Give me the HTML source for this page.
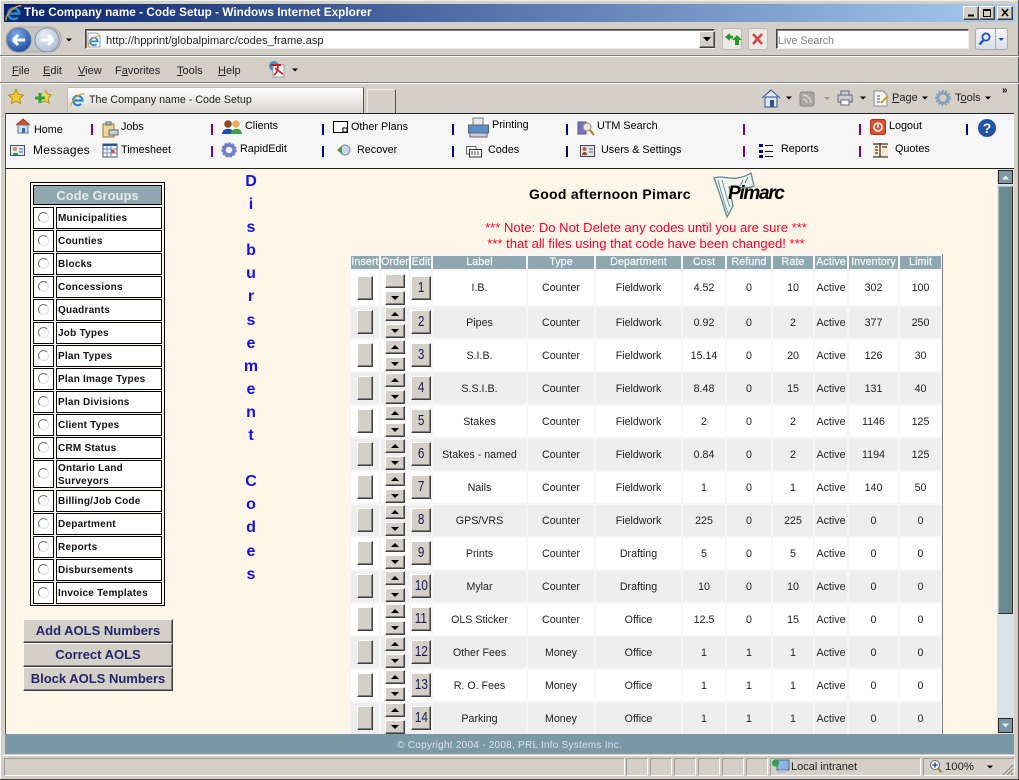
<!DOCTYPE html>
<html><head><meta charset="utf-8"><title>The Company name - Code Setup</title>
<style>
html,body{margin:0;padding:0;width:1019px;height:780px;overflow:hidden;background:#d4d0c8;font-family:"Liberation Sans",Arial,sans-serif;color:#000}
.a{position:absolute}
.t{position:absolute;white-space:nowrap;line-height:14px;font-size:10.8px}
.m{font-size:11px;color:#222}
u{text-decoration:underline}
.sep{position:absolute;width:1px;height:11px;border-left:2px solid #800080}
.n{border-color:#000080}
.pane{position:absolute;top:758px;height:16px;border:1px solid #999;border-right-color:#fff;border-bottom-color:#fff}
.box{position:absolute;box-sizing:border-box;background:#fff;border:1px solid #000;height:22px}
.lb{font:bold 10px/22px "Liberation Sans",Arial,sans-serif;padding-left:1px;letter-spacing:.23px;white-space:nowrap;color:#111}
.rad{position:absolute;left:4px;top:4px;width:9px;height:9px;border-radius:50%;border:1.5px solid #777;border-right-color:#ddd;border-bottom-color:#ddd;background:#fff;box-sizing:content-box}
.btn{position:absolute;box-sizing:border-box;background:#d4d0c8;border:1px solid;border-color:#fff #404040 #404040 #fff;box-shadow:inset -1px -1px 0 #808080}
.bb{left:23px;width:150px;height:24px;text-align:center;font:bold 13px/21px "Liberation Sans",Arial,sans-serif;color:#25256e}
table{border-collapse:separate;border-spacing:2px;table-layout:fixed;width:594px;font-size:10.67px;color:#222}
th{background:#8fa8b0;color:#fff;font-weight:normal;height:13px;padding:0;line-height:13px;overflow:hidden;white-space:nowrap;letter-spacing:.1px;-webkit-text-stroke:.2px #eef3f4}
td{padding:0;text-align:center;height:31px;background:#fff;position:relative;white-space:nowrap;overflow:visible}
tbody tr:first-child td{height:34px}
tr.g td{background:#eee}
.ins{left:6px;top:3px;width:16px;height:24px}
.up{left:4px;top:0;width:20px;height:14px}
.dn{left:4px;top:17px;width:20px;height:14px}
.ed{left:0;top:3px;width:20px;height:24px;font-size:15px;line-height:22px;color:#1a1a55;text-align:center}
.ed b{display:inline-block;font-weight:normal;transform:scaleX(.78)}
.up:after,.dn:after{content:"";position:absolute;left:5px;width:0;height:0;border-left:4px solid transparent;border-right:4px solid transparent}
.up:after{top:4px;border-bottom:4px solid #000}
.dn:after{top:4px;border-top:4px solid #000}
tbody tr:first-child .ins,tbody tr:first-child .ed{top:5px}
tbody tr:first-child .up{top:3px}
tbody tr:first-child .up:after{display:none}
tbody tr:first-child .dn{top:20px}
</style></head>
<body>
<!-- title bar -->
<div class="a" style="left:0;top:0;width:1019px;height:780px;background:#d4d0c8"></div>
<div class="a" style="left:0;top:0;width:1019px;height:1px;background:#eee"></div>
<div class="a" style="left:0;top:0;width:1px;height:780px;background:#fff"></div>
<div class="a" style="left:1018px;top:0;width:1px;height:780px;background:#555"></div>
<div class="a" style="left:0;top:779px;width:1019px;height:1px;background:#444"></div>
<div class="a" style="left:4px;top:4px;width:1011px;height:18px;background:linear-gradient(90deg,#0a246a,#a6caf0)"></div>
<div class="t" style="left:24px;top:6px;font-weight:bold;font-size:11.7px;color:#fff;letter-spacing:.05px">The Company name - Code Setup - Windows Internet Explorer</div>
<div class="btn" style="left:963px;top:6px;width:16px;height:14px"></div>
<div class="btn" style="left:979px;top:6px;width:16px;height:14px"></div>
<div class="btn" style="left:997px;top:6px;width:16px;height:14px"></div>

<!-- address row -->
<div class="a" style="left:85px;top:29px;width:630px;height:20px;box-sizing:border-box;background:#fff;border:1px solid #444;border-right-color:#eee;border-bottom-color:#eee;box-shadow:inset 1px 1px 0 #808080"></div>
<div class="t" style="left:106px;top:34px;color:#222;font-size:11.2px">http://hpprint/globalpimarc/codes_frame.asp</div>
<div class="btn" style="left:699px;top:31px;width:16px;height:17px"></div>
<div class="a" style="left:722px;top:28px;width:20px;height:22px;box-sizing:border-box;background:#eceae6;border:1px solid #bbb;border-radius:3px"></div>
<div class="a" style="left:748px;top:28px;width:20px;height:22px;box-sizing:border-box;background:#eceae6;border:1px solid #bbb;border-radius:3px"></div>
<div class="a" style="left:776px;top:29px;width:193px;height:20px;box-sizing:border-box;background:#fff;border:1px solid #444;border-right-color:#eee;border-bottom-color:#eee;box-shadow:inset 1px 1px 0 #808080"></div>
<div class="t" style="left:778px;top:34px;color:#808080;font-size:10.6px">Live Search</div>
<div class="a" style="left:975px;top:28px;width:33px;height:22px;box-sizing:border-box;background:linear-gradient(#f4f6fa,#d8deea);border:1px solid #aaa;border-radius:3px"></div>
<div class="a" style="left:995px;top:29px;width:1px;height:20px;background:#aaa"></div>
<div class="a" style="left:0;top:55px;width:1019px;height:1px;background:#808080"></div>
<div class="a" style="left:0;top:56px;width:1019px;height:1px;background:#fff"></div>

<!-- menu -->
<div class="t m" style="left:12px;top:64px"><u>F</u>ile</div>
<div class="t m" style="left:43px;top:64px"><u>E</u>dit</div>
<div class="t m" style="left:78px;top:64px"><u>V</u>iew</div>
<div class="t m" style="left:115px;top:64px">F<u>a</u>vorites</div>
<div class="t m" style="left:177px;top:64px"><u>T</u>ools</div>
<div class="t m" style="left:218px;top:64px"><u>H</u>elp</div>
<div class="a" style="left:0;top:82px;width:1019px;height:1px;background:#808080"></div>
<div class="a" style="left:0;top:83px;width:1019px;height:1px;background:#fff"></div>

<!-- tabs -->
<div class="a" style="left:67px;top:87px;width:297px;height:26px;box-sizing:border-box;background:linear-gradient(#fff,#d8d5cd);border:1px solid #bbb;border-right:1px solid #555;border-bottom:0"></div>
<div class="t" style="left:89px;top:93px;font-size:10.7px;color:#222">The Company name - Code Setup</div>
<div class="a" style="left:367px;top:89px;width:29px;height:24px;box-sizing:border-box;background:#d4d0c8;border:1px solid #eee;border-right:1px solid #555;border-bottom:0"></div>
<div class="t m" style="left:892px;top:91px"><u>P</u>age</div>
<div class="t m" style="left:955px;top:91px">T<u>o</u>ols</div>
<div class="t" style="left:1002px;top:84px;font-weight:bold;font-size:10px">»</div>

<!-- app nav -->
<div class="a" style="left:5px;top:113px;width:1009px;height:56px;box-sizing:border-box;background:#f6f6f6;border-top:1px solid #222;border-bottom:1px solid #222;border-left:1px solid #555"></div>
<div class="t" style="left:34px;top:123px">Home</div>
<div class="t" style="left:121px;top:120px">Jobs</div>
<div class="t" style="left:245px;top:119px">Clients</div>
<div class="t" style="left:351px;top:120px">Other Plans</div>
<div class="t" style="left:492px;top:118px">Printing</div>
<div class="t" style="left:597px;top:119px">UTM Search</div>
<div class="t" style="left:889px;top:119px">Logout</div>
<div class="t" style="left:33px;top:143px;font-size:12px;letter-spacing:.3px">Messages</div>
<div class="t" style="left:121px;top:143px">Timesheet</div>
<div class="t" style="left:240px;top:142px">RapidEdit</div>
<div class="t" style="left:357px;top:143px">Recover</div>
<div class="t" style="left:488px;top:143px">Codes</div>
<div class="t" style="left:601px;top:143px">Users &amp; Settings</div>
<div class="t" style="left:781px;top:142px">Reports</div>
<div class="t" style="left:895px;top:142px">Quotes</div>
<div class="sep" style="left:91px;top:124px"></div>
<div class="sep" style="left:211px;top:124px"></div><div class="sep" style="left:211px;top:146px"></div>
<div class="sep n" style="left:322px;top:124px"></div><div class="sep n" style="left:322px;top:146px"></div>
<div class="sep n" style="left:452px;top:124px"></div><div class="sep n" style="left:452px;top:146px"></div>
<div class="sep n" style="left:566px;top:124px"></div><div class="sep n" style="left:566px;top:146px"></div>
<div class="sep" style="left:743px;top:124px"></div><div class="sep" style="left:743px;top:146px"></div>
<div class="sep" style="left:859px;top:124px"></div><div class="sep" style="left:859px;top:146px"></div>
<div class="sep n" style="left:966px;top:124px"></div>

<!-- viewport -->
<div class="a" style="left:5px;top:169px;width:1009px;height:565px;background:#fff5e8;border-left:1px solid #555;box-sizing:border-box"></div>

<!-- code groups -->
<div class="a" style="left:30px;top:182px;width:135px;height:424px;box-sizing:border-box;border:1px solid #000;background:#fff5e8"></div>
<div class="a" style="left:33px;top:185px;width:129px;height:20px;box-sizing:border-box;background:#8fa8b0;border:1px solid #000;text-align:center;color:#e4ebee;font:bold 13px/19px 'Liberation Sans',Arial,sans-serif">Code Groups</div>
<div class="box" style="left:33px;top:207px;width:21px"><span class="rad"></span></div><div class="box lb" style="left:56px;top:207px;width:106px">Municipalities</div>
<div class="box" style="left:33px;top:230px;width:21px"><span class="rad"></span></div><div class="box lb" style="left:56px;top:230px;width:106px">Counties</div>
<div class="box" style="left:33px;top:253px;width:21px"><span class="rad"></span></div><div class="box lb" style="left:56px;top:253px;width:106px">Blocks</div>
<div class="box" style="left:33px;top:276px;width:21px"><span class="rad"></span></div><div class="box lb" style="left:56px;top:276px;width:106px">Concessions</div>
<div class="box" style="left:33px;top:299px;width:21px"><span class="rad"></span></div><div class="box lb" style="left:56px;top:299px;width:106px">Quadrants</div>
<div class="box" style="left:33px;top:322px;width:21px"><span class="rad"></span></div><div class="box lb" style="left:56px;top:322px;width:106px">Job Types</div>
<div class="box" style="left:33px;top:345px;width:21px"><span class="rad"></span></div><div class="box lb" style="left:56px;top:345px;width:106px">Plan Types</div>
<div class="box" style="left:33px;top:368px;width:21px"><span class="rad"></span></div><div class="box lb" style="left:56px;top:368px;width:106px">Plan Image Types</div>
<div class="box" style="left:33px;top:391px;width:21px"><span class="rad"></span></div><div class="box lb" style="left:56px;top:391px;width:106px">Plan Divisions</div>
<div class="box" style="left:33px;top:414px;width:21px"><span class="rad"></span></div><div class="box lb" style="left:56px;top:414px;width:106px">Client Types</div>
<div class="box" style="left:33px;top:437px;width:21px"><span class="rad"></span></div><div class="box lb" style="left:56px;top:437px;width:106px">CRM Status</div>
<div class="box" style="left:33px;top:460px;width:21px;height:28px"><span class="rad" style="top:7px"></span></div><div class="box lb" style="left:56px;top:460px;width:106px;height:28px;line-height:13px;padding-top:1px">Ontario Land<br>Surveyors</div>
<div class="box" style="left:33px;top:490px;width:21px"><span class="rad"></span></div><div class="box lb" style="left:56px;top:490px;width:106px">Billing/Job Code</div>
<div class="box" style="left:33px;top:513px;width:21px"><span class="rad"></span></div><div class="box lb" style="left:56px;top:513px;width:106px">Department</div>
<div class="box" style="left:33px;top:536px;width:21px"><span class="rad"></span></div><div class="box lb" style="left:56px;top:536px;width:106px">Reports</div>
<div class="box" style="left:33px;top:559px;width:21px"><span class="rad"></span></div><div class="box lb" style="left:56px;top:559px;width:106px">Disbursements</div>
<div class="box" style="left:33px;top:582px;width:21px"><span class="rad"></span></div><div class="box lb" style="left:56px;top:582px;width:106px">Invoice Templates</div>

<div class="btn bb" style="top:619px">Add AOLS Numbers</div>
<div class="btn bb" style="top:643px">Correct AOLS</div>
<div class="btn bb" style="top:667px">Block AOLS Numbers</div>

<!-- vertical title -->
<div class="a" style="left:231px;top:170px;width:40px;text-align:center;font:bold 16px/23.1px 'Liberation Sans',Arial,sans-serif;color:#1010f0">D<br>i<br>s<br>b<br>u<br>r<br>s<br>e<br>m<br>e<br>n<br>t<br>&nbsp;<br>C<br>o<br>d<br>e<br>s</div>

<!-- greeting -->
<div class="t" style="left:529px;top:187px;font-weight:bold;font-size:14px;letter-spacing:.3px">Good afternoon Pimarc</div>
<div class="t" style="left:728px;top:183px;z-index:2;font:italic bold 19px/22px 'Liberation Sans',Arial,sans-serif;letter-spacing:-1.3px;color:#000">Pimarc</div>
<div class="a" style="left:440px;top:220px;width:412px;text-align:center;color:#f5002d;font-size:13px;line-height:16px;white-space:nowrap;letter-spacing:.03px">*** Note: Do Not Delete any codes until you are sure ***<br>*** that all files using that code have been changed! ***</div>

<!-- table -->
<div class="a" style="left:349px;top:254px;width:593px;height:480px;overflow:hidden;background:#f6f6f6;border-right:1px solid #808080">
<table>
<colgroup><col style="width:28px"><col style="width:28px"><col style="width:20px"><col style="width:93px"><col style="width:66px"><col style="width:85px"><col style="width:42px"><col style="width:44px"><col style="width:40px"><col style="width:32px"><col style="width:49px"><col style="width:41px"></colgroup>
<thead><tr><th>Insert</th><th>Order</th><th>Edit</th><th>Label</th><th>Type</th><th>Department</th><th>Cost</th><th>Refund</th><th>Rate</th><th>Active</th><th>Inventory</th><th>Limit</th></tr></thead>
<tbody>
<tr><td><span class="btn ins"></span></td><td><span class="btn up"></span><span class="btn dn"></span></td><td><span class="btn ed"><b>1</b></span></td><td>I.B.</td><td>Counter</td><td>Fieldwork</td><td>4.52</td><td>0</td><td>10</td><td>Active</td><td>302</td><td>100</td></tr>
<tr class="g"><td><span class="btn ins"></span></td><td><span class="btn up"></span><span class="btn dn"></span></td><td><span class="btn ed"><b>2</b></span></td><td>Pipes</td><td>Counter</td><td>Fieldwork</td><td>0.92</td><td>0</td><td>2</td><td>Active</td><td>377</td><td>250</td></tr>
<tr><td><span class="btn ins"></span></td><td><span class="btn up"></span><span class="btn dn"></span></td><td><span class="btn ed"><b>3</b></span></td><td>S.I.B.</td><td>Counter</td><td>Fieldwork</td><td>15.14</td><td>0</td><td>20</td><td>Active</td><td>126</td><td>30</td></tr>
<tr class="g"><td><span class="btn ins"></span></td><td><span class="btn up"></span><span class="btn dn"></span></td><td><span class="btn ed"><b>4</b></span></td><td>S.S.I.B.</td><td>Counter</td><td>Fieldwork</td><td>8.48</td><td>0</td><td>15</td><td>Active</td><td>131</td><td>40</td></tr>
<tr><td><span class="btn ins"></span></td><td><span class="btn up"></span><span class="btn dn"></span></td><td><span class="btn ed"><b>5</b></span></td><td>Stakes</td><td>Counter</td><td>Fieldwork</td><td>2</td><td>0</td><td>2</td><td>Active</td><td>1146</td><td>125</td></tr>
<tr class="g"><td><span class="btn ins"></span></td><td><span class="btn up"></span><span class="btn dn"></span></td><td><span class="btn ed"><b>6</b></span></td><td>Stakes - named</td><td>Counter</td><td>Fieldwork</td><td>0.84</td><td>0</td><td>2</td><td>Active</td><td>1194</td><td>125</td></tr>
<tr><td><span class="btn ins"></span></td><td><span class="btn up"></span><span class="btn dn"></span></td><td><span class="btn ed"><b>7</b></span></td><td>Nails</td><td>Counter</td><td>Fieldwork</td><td>1</td><td>0</td><td>1</td><td>Active</td><td>140</td><td>50</td></tr>
<tr class="g"><td><span class="btn ins"></span></td><td><span class="btn up"></span><span class="btn dn"></span></td><td><span class="btn ed"><b>8</b></span></td><td>GPS/VRS</td><td>Counter</td><td>Fieldwork</td><td>225</td><td>0</td><td>225</td><td>Active</td><td>0</td><td>0</td></tr>
<tr><td><span class="btn ins"></span></td><td><span class="btn up"></span><span class="btn dn"></span></td><td><span class="btn ed"><b>9</b></span></td><td>Prints</td><td>Counter</td><td>Drafting</td><td>5</td><td>0</td><td>5</td><td>Active</td><td>0</td><td>0</td></tr>
<tr class="g"><td><span class="btn ins"></span></td><td><span class="btn up"></span><span class="btn dn"></span></td><td><span class="btn ed"><b>10</b></span></td><td>Mylar</td><td>Counter</td><td>Drafting</td><td>10</td><td>0</td><td>10</td><td>Active</td><td>0</td><td>0</td></tr>
<tr><td><span class="btn ins"></span></td><td><span class="btn up"></span><span class="btn dn"></span></td><td><span class="btn ed"><b>11</b></span></td><td>OLS Sticker</td><td>Counter</td><td>Office</td><td>12.5</td><td>0</td><td>15</td><td>Active</td><td>0</td><td>0</td></tr>
<tr class="g"><td><span class="btn ins"></span></td><td><span class="btn up"></span><span class="btn dn"></span></td><td><span class="btn ed"><b>12</b></span></td><td>Other Fees</td><td>Money</td><td>Office</td><td>1</td><td>1</td><td>1</td><td>Active</td><td>0</td><td>0</td></tr>
<tr><td><span class="btn ins"></span></td><td><span class="btn up"></span><span class="btn dn"></span></td><td><span class="btn ed"><b>13</b></span></td><td>R. O. Fees</td><td>Money</td><td>Office</td><td>1</td><td>1</td><td>1</td><td>Active</td><td>0</td><td>0</td></tr>
<tr class="g"><td><span class="btn ins"></span></td><td><span class="btn up"></span><span class="btn dn"></span></td><td><span class="btn ed"><b>14</b></span></td><td>Parking</td><td>Money</td><td>Office</td><td>1</td><td>1</td><td>1</td><td>Active</td><td>0</td><td>0</td></tr>
</tbody></table>
</div>

<!-- scrollbar -->
<div class="a" style="left:997px;top:169px;width:17px;height:565px;background:#dbe3ea"></div>
<div class="a" style="left:998px;top:170px;width:15px;height:14px;box-sizing:border-box;background:#7a98a5;border:1px solid #332222"></div>
<div class="a" style="left:998px;top:186px;width:15px;height:428px;box-sizing:border-box;background:#6a8a92;border:1px solid #3a3030;border-top-color:#a8bcc2;border-left-color:#a8bcc2"></div>
<div class="a" style="left:998px;top:718px;width:15px;height:15px;box-sizing:border-box;background:#7a98a5;border:1px solid #332222"></div>

<!-- footer -->
<div class="a" style="left:5px;top:734px;width:1009px;height:20px;background:#7a98a5;text-align:center;color:#dbe4e8;font-size:10px;line-height:23px;letter-spacing:.25px">© Copyright 2004 - 2008, PRL Info Systems Inc.</div>
<div class="a" style="left:3px;top:755px;width:1012px;height:1px;background:#fff"></div>

<!-- status bar -->
<div class="pane" style="left:4px;width:619px"></div>
<div class="pane" style="left:626px;width:20px"></div>
<div class="pane" style="left:650px;width:20px"></div>
<div class="pane" style="left:674px;width:20px"></div>
<div class="pane" style="left:698px;width:20px"></div>
<div class="pane" style="left:722px;width:20px"></div>
<div class="pane" style="left:746px;width:20px"></div>
<div class="pane" style="left:770px;width:149px"></div>
<div class="pane" style="left:923px;width:90px"></div>
<div class="t" style="left:791px;top:760px;font-size:11px;color:#222">Local intranet</div>
<div class="t" style="left:945px;top:760px;font-size:11.3px;color:#222">100%</div>

<!-- icons -->
<svg class="a" style="left:0;top:0" width="1019" height="780" viewBox="0 0 1019 780" xmlns="http://www.w3.org/2000/svg">
<defs>
<radialGradient id="bk" cx=".4" cy=".3" r=".8"><stop offset="0" stop-color="#7fb2ea"/><stop offset="1" stop-color="#0f3f9c"/></radialGradient>
<radialGradient id="fw" cx=".4" cy=".3" r=".8"><stop offset="0" stop-color="#e8eef6"/><stop offset="1" stop-color="#a8bad2"/></radialGradient>
<g id="ie"><path d="M-4.500 .5H4.500A4.700 4.700 0 1 0 3.200 3.800" fill="none" stroke="#2a86d6" stroke-width="2.200"/><path d="M-7 6.500C-7.500 2-1-6 6.500-6.500" fill="none" stroke="#e8a020" stroke-width="1.200"/></g>
<g id="dd"><path d="M-3-1.500H3L0 1.500Z" fill="#000"/></g>
</defs>
<!-- window buttons -->
<path d="M968 15.500H974" stroke="#000" stroke-width="2"/>
<path d="M983.500 9.500H990.500V16.500H983.500ZM983.500 10.500H990.500" fill="none" stroke="#000"/>
<path d="M1002 9L1008 16M1008 9L1002 16" stroke="#000" stroke-width="1.600"/>
<g transform="translate(14 13) scale(1.150)"><use href="#ie"/></g>
<!-- back / forward -->
<rect x="6" y="27" width="55" height="25" rx="12" fill="#c4c4c4" stroke="#aaa"/>
<circle cx="19" cy="40" r="12" fill="url(#bk)" stroke="#6a7a96"/>
<path d="M13 40H25M13 40L18 35M13 40L18 45" fill="none" stroke="#fff" stroke-width="3"/>
<circle cx="47" cy="40" r="12" fill="url(#fw)" stroke="#8a96a6"/>
<path d="M41 40H53M53 40L48 35M53 40L48 45" fill="none" stroke="#fff" stroke-width="3"/>
<use href="#dd" x="69" y="40"/>
<path d="M88 33H97L100 36V47H88Z" fill="#fff" stroke="#99a"/>
<g transform="translate(94 41) scale(.8)"><use href="#ie"/></g>
<path d="M703 37H711L707 41.500Z" fill="#000"/>
<path d="M725 37L730 33V35.500H733V38.500H730V41Z" fill="#2a9a2a"/>
<path d="M737 35L732 40H735V45H739V40H742Z" fill="#2a9a2a"/>
<path d="M753 34L762 44M762 34L753 44" stroke="#d84848" stroke-width="2.600"/>
<circle cx="986" cy="37" r="3.600" fill="none" stroke="#1a50d0" stroke-width="1.800"/><path d="M983.500 40L979.500 44.500" stroke="#1a50d0" stroke-width="2.400"/>
<path d="M998.500 38H1004L1001.200 41Z" fill="#1a50d0"/>
<!-- pdf icon -->
<circle cx="274" cy="66" r="5" fill="#4a8ac8"/><path d="M273 65H284V77H273Z" fill="#fff" stroke="#999"/><path d="M275 68C279 71 281 73 283 74M278 66C278 70 277 73 274 75" fill="none" stroke="#d01818" stroke-width="1.600"/><path d="M271 65H281" stroke="#d01818" stroke-width="2"/>
<use href="#dd" x="295" y="70"/>
<!-- favourites -->
<path d="M16 89.500L18.300 94.500L23.500 95L19.600 98.500L20.700 103.500L16 101L11.300 103.500L12.400 98.500L8.500 95L13.700 94.500Z" fill="#f8c830" stroke="#c08a18"/>
<path d="M45 89.500L47 94L51 95L48 98L49 103L45 101L42 102" fill="#f8d850" stroke="#b89020"/>
<path d="M40 93V103M35 98H45" stroke="#30a030" stroke-width="3"/>
<use href="#ie" x="78" y="100"/>
<!-- toolbar -->
<path d="M762 98L771 90L780 98M765 97V107H777V97Z" fill="#dfe8f4" stroke="#2a5090"/><path d="M770 100H774V107H770Z" fill="#2a5090"/>
<use href="#dd" x="789" y="98"/>
<rect x="800" y="92" width="14" height="14" rx="2" fill="#a8a8a0" stroke="#888"/><path d="M803 95C807 95 811 99 811 103M803 99C805 99 807 101 807 103" fill="none" stroke="#d8d8d0" stroke-width="1.400"/>
<path d="M824 97H830L827 100Z" fill="#999"/>
<path d="M841 91H849V95H841ZM838 95H852V102H838Z" fill="#c8ccd4" stroke="#667"/><path d="M841 100H849V105H841Z" fill="#fff" stroke="#667"/>
<use href="#dd" x="863" y="98"/>
<path d="M874 91H883L887 95V106H874Z" fill="#f4f4f4" stroke="#889"/><path d="M877 96H880M877 99H880M877 102H880" stroke="#557"/><path d="M881 103L888 96" stroke="#c8a030" stroke-width="2"/>
<use href="#dd" x="925" y="98"/>
<circle cx="943" cy="98" r="5" fill="none" stroke="#8aa0b8" stroke-width="3"/><circle cx="943" cy="98" r="7.200" fill="none" stroke="#8aa0b8" stroke-width="1.600" stroke-dasharray="2 1.600"/>
<use href="#dd" x="988" y="98"/>
<!-- nav: home -->
<path d="M16 125L23 119L30 125" fill="#d84a2a" stroke="#b03018"/><path d="M18 125H28V133H18Z" fill="#cfe0f4" stroke="#5a7aa8"/><path d="M22 128H25V133H22Z" fill="#3a6ab0"/>
<!-- jobs -->
<path d="M103 124H114V137H103Z" fill="#f0d890" stroke="#8a7a40"/><path d="M106 122H111V125H106Z" fill="#bbb" stroke="#666"/><path d="M109 130H118V135H109Z" fill="#c8d0d8" stroke="#667"/>
<!-- clients -->
<circle cx="228" cy="124" r="3.800" fill="#8a4a20"/><path d="M222 134C222 127 234 127 234 134Z" fill="#2050a8"/><circle cx="236" cy="124" r="3.800" fill="#e8b060"/><path d="M231 134C231 127 242 127 242 134Z" fill="#40a040"/>
<!-- other plans -->
<rect x="333.500" y="121.500" width="14" height="11" fill="#fff" stroke="#000"/><rect x="343" y="128" width="4" height="4" fill="#fff" stroke="#000"/>
<!-- printing -->
<path d="M473 118H483V125H473Z" fill="#e8e8e8" stroke="#778"/><path d="M468.500 125H488.500V133H468.500Z" fill="#5a8cc8" stroke="#567"/><path d="M470 133H487V137H470Z" fill="#ccd" stroke="#667"/>
<!-- utm -->
<path d="M578 122H586V134H578Z" fill="#7a70c0" stroke="#5a5090"/><circle cx="587" cy="127" r="4" fill="#dceaf8" stroke="#b09040"/><path d="M590 130L594 135" stroke="#b08030" stroke-width="2"/>
<!-- logout -->
<rect x="870.500" y="119.500" width="15" height="15" rx="2" fill="#e05030" stroke="#b03018"/><circle cx="878" cy="127" r="4" fill="none" stroke="#fff" stroke-width="1.600"/><path d="M878 124V128" stroke="#fff" stroke-width="1.400"/>
<!-- help -->
<circle cx="987" cy="128" r="9" fill="#1f52a8"/><text x="987" y="133" text-anchor="middle" font-family="Liberation Sans" font-weight="bold" font-size="14" fill="#fff">?</text>
<!-- messages -->
<rect x="10.500" y="145.500" width="14" height="10" fill="#dfe8f4" stroke="#456"/><circle cx="15" cy="149" r="2" fill="#d89050"/><path d="M13 154H18" stroke="#20a050" stroke-width="2"/><path d="M19 149H23M19 152H23" stroke="#567"/>
<!-- timesheet -->
<rect x="103" y="144" width="14" height="13" fill="#fff" stroke="#456"/><path d="M103 145H117" stroke="#2050a0" stroke-width="2"/><path d="M103 149H117M103 153H117M107 146V157M111 146V157" stroke="#6a8ac0"/><rect x="111.500" y="150" width="3" height="3" fill="#e04030"/>
<!-- rapidedit -->
<circle cx="229" cy="150" r="5" fill="none" stroke="#7080c8" stroke-width="3.500"/><circle cx="229" cy="150" r="7" fill="none" stroke="#7080c8" stroke-width="1.400" stroke-dasharray="2.400 1.600"/>
<!-- recover -->
<circle cx="345" cy="150" r="5" fill="#c8d8e8" stroke="#7a90a8"/><path d="M337 150L342 146V154Z" fill="#40a040"/>
<!-- codes -->
<path d="M466.500 146.500H476V154H466.500Z" fill="#fff" stroke="#666"/><path d="M469.500 149.500H481.500V157H469.500Z" fill="#fff" stroke="#333"/><path d="M471 152H480M471 154H480" stroke="#444" stroke-dasharray="2 1"/>
<!-- users -->
<rect x="580.500" y="145.500" width="14" height="11" fill="#dde4f0" stroke="#445"/><circle cx="584.500" cy="149" r="2" fill="#c86030"/><path d="M582 155C582 151 587 151 587 155Z" fill="#a04020"/><path d="M589 149H593M589 152H593" stroke="#567"/>
<!-- reports -->
<path d="M759 144H763V147H759ZM759 150H763V153H759ZM759 155H763V158H759Z" fill="#000080"/><path d="M765 145.500H773M765 151.500H773M765 156.500H773" stroke="#111"/>
<!-- quotes -->
<rect x="873" y="143" width="15" height="14" fill="#f8e8c8"/><path d="M873 144H888M873 157H888M880 143V157" stroke="#111"/><path d="M875 147H878M875 150H878M875 153H878M882 147H887" stroke="#111"/>
<!-- pimarc flag -->
<path d="M714 178C724 174 733 184 751 173L754 186C746 190 738 186 729 187L733 206L727 217C723 204 719 191 714 178Z" fill="#f4f4ee" stroke="#5a8a94" stroke-width="1.300"/>
<path d="M718 180C721 191 724 203 728 213M722 180C725 190 727 200 730 207" fill="none" stroke="#6a9aa4"/>
<path d="M743 180L740 186M748 177L745 183" stroke="#5a8a94"/>
<!-- scrollbar arrows -->
<path d="M1002 179.500H1009L1005.500 175.500Z" fill="#e8eef0"/>
<path d="M1002 723.500H1009L1005.500 727.500Z" fill="#e8eef0"/>
<!-- status icons -->
<rect x="777" y="760" width="12" height="10" fill="#8ab4e8" stroke="#567"/><circle cx="775.500" cy="763" r="3.600" fill="#30a050"/><path d="M779 770H786V773H778Z" fill="#bbc"/>
<circle cx="935" cy="765" r="4.500" fill="#fff" stroke="#667"/><path d="M932.500 765H937.500M935 762.500V767.500" stroke="#1a50c0" stroke-width="1.600"/><path d="M938 768.500L941.500 772" stroke="#a08030" stroke-width="2"/>
<use href="#dd" x="990" y="767"/>
<path d="M1003 775L1013 765M1007 775L1013 769M1011 775L1013 773" stroke="#888"/>
</svg>
</body></html>
